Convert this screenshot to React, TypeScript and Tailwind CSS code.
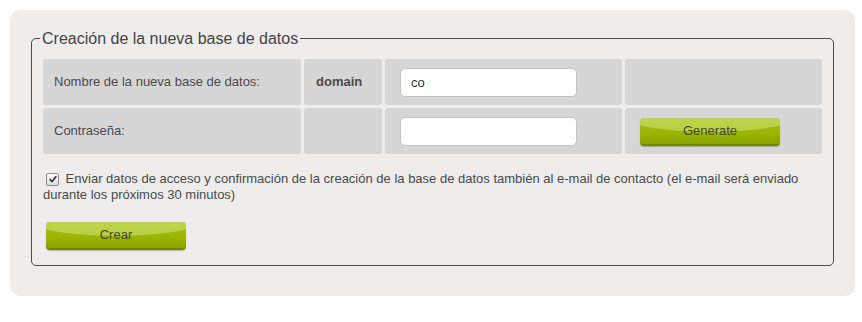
import React from 'react';

function GreenButton({ label }: { label: string }) {
  return (
    <button
      type="button"
      className="relative h-[28px] w-[140px] overflow-hidden rounded-[4px] border-b-2 border-[#6f8600] bg-[linear-gradient(#a9c41c,#99b500_60%,#8aa400)] text-[13px] text-[#444433] shadow-[0_1px_1px_rgba(0,0,0,0.25)]"
    >
      {/* glossy highlight */}
      <span className="absolute -left-[10%] -top-[16px] h-[30px] w-[120%] rounded-[50%] bg-[#c4da60]/70" />
      <span className="relative">{label}</span>
    </button>
  );
}

function CheckMark() {
  return (
    <span className="relative mx-[3px] inline-flex h-[13px] w-[13px] items-center justify-center rounded-[2px] border border-[#8f8f8f] bg-[linear-gradient(#fcfcfc,#dcdcdc)] align-[-1px]">
      <svg viewBox="0 0 12 12" className="h-[10px] w-[10px]">
        <path d="M2 6.2 L4.8 9 L10 2.6" fill="none" stroke="#333" strokeWidth="2" />
      </svg>
    </span>
  );
}

export default function App() {
  return (
    <div className="bg-white p-[10px] pr-[7px] font-['Liberation_Sans',Arial,sans-serif] text-[13px] text-[#4a4a4a]">
      <div className="rounded-[10px] bg-[#eeedeb] px-[21px] pb-[30px] pt-[19px]">
        <fieldset className="rounded-[5px] border border-[#4d4d4d] px-[11px] pb-[15px]">
          <legend className="-ml-[3px] px-[2px] text-[16px] leading-[19px] text-[#444]">
            Creación de la nueva base de datos
          </legend>

          <div className="mt-[11px] grid grid-cols-[258px_78px_237px_197px] grid-rows-[46px_46px] gap-[3px]">
            <div className="flex items-center rounded-[3px] bg-[#d6d6d6] pl-[11px]">
              Nombre de la nueva base de datos:
            </div>
            <div className="flex items-center rounded-[3px] bg-[#d6d6d6] pl-[12px] font-bold">domain</div>
            <div className="flex items-center rounded-[3px] bg-[#d6d6d6] pl-[15px]">
              <input
                defaultValue="co"
                className="h-[29px] w-[177px] rounded-[5px] border border-[#c4c4c4] bg-white px-[10px] text-[13px] text-[#333] outline-none"
              />
            </div>
            <div className="rounded-[3px] bg-[#d6d6d6]" />

            <div className="flex items-center rounded-[3px] bg-[#d6d6d6] pl-[11px]">Contraseña:</div>
            <div className="rounded-[3px] bg-[#d6d6d6]" />
            <div className="flex items-center rounded-[3px] bg-[#d6d6d6] pl-[15px]">
              <input
                type="text"
                className="h-[29px] w-[177px] rounded-[5px] border border-[#c4c4c4] bg-white px-[10px] text-[13px] outline-none"
              />
            </div>
            <div className="flex items-center rounded-[3px] bg-[#d6d6d6] pl-[15px] pt-[1px]">
              <GreenButton label="Generate" />
            </div>
          </div>

          <p className="mt-[17px] leading-[16px]">
            <CheckMark /> Enviar datos de acceso y confirmación de la creación de la base de datos también al e-mail de
            contacto (el e-mail será enviado durante los próximos 30 minutos)
          </p>

          <div className="mt-[19px] pl-[3px]">
            <GreenButton label="Crear" />
          </div>
        </fieldset>
      </div>
    </div>
  );
}
